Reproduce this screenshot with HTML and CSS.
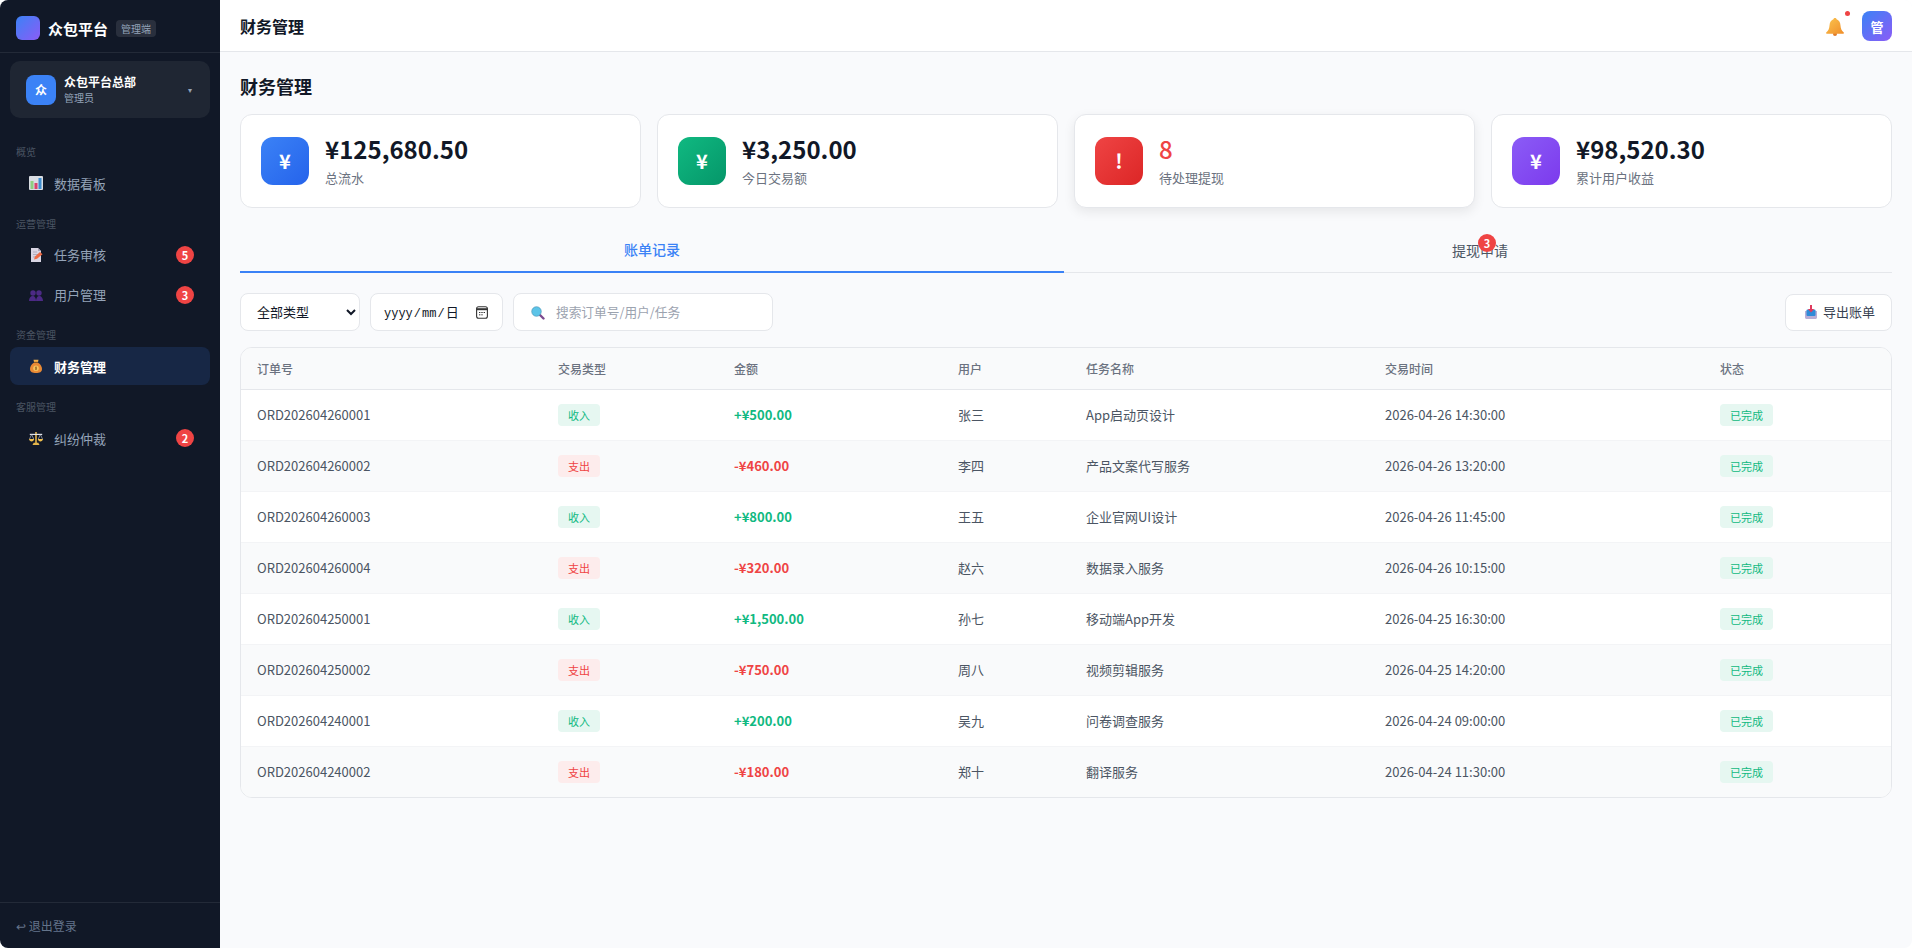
FILE: index.html
```html
<!DOCTYPE html>
<html lang="zh-CN">
<head>
<meta charset="utf-8">
<title>财务管理</title>
<link rel="stylesheet" href="styles.css">
</head>
<body>
<div class="app">
  <aside class="sidebar">
    <div class="brand">
      <div class="brand-logo"></div>
      <span class="brand-name">众包平台</span>
      <span class="brand-tag">管理端</span>
    </div>
    <div class="account">
      <div class="account-avatar">众</div>
      <div class="account-info">
        <div class="account-name">众包平台总部</div>
        <div class="account-role">管理员</div>
      </div>
      <span class="account-caret">▾</span>
    </div>
    <nav class="nav">
      <div class="nav-label">概览</div>
      <a class="nav-item"><span class="nav-icon">
        <svg viewBox="0 0 14 14" width="14" height="14"><rect x="0" y="0" width="14" height="14" rx="1" fill="#d9dde3"/><rect x="1.5" y="5" width="3" height="8" fill="#8ed081"/><rect x="5.5" y="7" width="3" height="6" fill="#d8436e"/><rect x="9.5" y="2" width="3" height="11" fill="#3f8ed0"/></svg>
      </span><span class="nav-text">数据看板</span></a>
      <div class="nav-label">运营管理</div>
      <a class="nav-item"><span class="nav-icon">
        <svg viewBox="0 0 14 14" width="14" height="14"><path d="M2 0h7l3 3v11H2z" fill="#d9d5e3"/><path d="M9 0l3 3H9z" fill="#a9a4b8"/><path d="M4 4h4M4 6.5h5M4 9h3" stroke="#a7a2b5" stroke-width=".8"/><path d="M5 11.5l1-3 5-4.500 2.500 2.300-5.500 4.500z" fill="#ee6a45"/></svg>
      </span><span class="nav-text">任务审核</span><span class="nav-badge">5</span></a>
      <a class="nav-item"><span class="nav-icon">
        <svg viewBox="0 0 14 14" width="14" height="14"><g fill="#4c2a85"><circle cx="4" cy="5" r="2.700"/><circle cx="10" cy="5" r="2.700"/><path d="M0 13c0-3 1.500-5 3.700-5s3.300 2 3.300 5z"/><path d="M7 13c0-3 1.300-5 3.300-5S14 10 14 13z"/></g></svg>
      </span><span class="nav-text">用户管理</span><span class="nav-badge">3</span></a>
      <div class="nav-label">资金管理</div>
      <a class="nav-item active"><span class="nav-icon">
        <svg viewBox="0 0 14 14" width="14" height="14"><path d="M5 3L4.500 .8h5L9 3z" fill="#f4b04a"/><path d="M5.200 3.500h3.600C12 5.500 13 8 13 10c0 3-2.500 4-6 4s-6-1-6-4c0-2 1-4.500 4.200-6.500z" fill="#e98a35"/><rect x="5" y="2.800" width="4" height="1" fill="#8a5a22"/><circle cx="7" cy="9.300" r="2.800" fill="#f6c35c"/><path d="M7 7.500v3.600M8 8.300H6.500v1h1v1H6" stroke="#8a5a22" stroke-width=".6" fill="none"/></svg>
      </span><span class="nav-text">财务管理</span></a>
      <div class="nav-label">客服管理</div>
      <a class="nav-item"><span class="nav-icon">
        <svg viewBox="0 0 14 14" width="14" height="14"><path d="M6.200 1h1.600v11H6.200z" fill="#e5b54a"/><path d="M.8 2.800h12.400v1.200H.8z" fill="#e3e5ea"/><path d="M3.500 14h7l-1.200-2.200H4.700z" fill="#e5b54a"/><path d="M0 8h5.200c-.2 1.500-1.300 2.400-2.600 2.400S.2 9.500 0 8zM8.800 8H14c-.2 1.500-1.300 2.400-2.600 2.400S9 9.500 8.800 8z" fill="#f2c14e"/><path d="M2.600 3.500L.5 8M2.600 3.500L4.700 8M11.400 3.500L9.300 8M11.400 3.500L13.500 8" stroke="#c7ccd6" stroke-width=".6" fill="none"/></svg>
      </span><span class="nav-text">纠纷仲裁</span><span class="nav-badge">2</span></a>
    </nav>
    <div class="sidebar-foot">↩ 退出登录</div>
  </aside>
  <div class="main">
    <header class="topbar">
      <div class="topbar-title">财务管理</div>
      <div class="topbar-right">
        <div class="bell">
          <svg viewBox="0 0 18 18" width="18" height="18"><defs><linearGradient id="bellFill" x1="0" y1="0" x2="1" y2="1"><stop offset="0" stop-color="#fbc54f"/><stop offset="1" stop-color="#f08e2a"/></linearGradient></defs><circle cx="9" cy="16" r="2" fill="#e07b2a"/><path d="M9 0c1 0 1.500.6 1.600 1.300C13 2.200 14.300 4.500 14.500 7.500c.2 3 1 5 3.300 7 .3.500 0 1.200-.6 1.200H.8c-.6 0-.9-.7-.6-1.200 2.300-2 3.100-4 3.300-7 .2-3 1.500-5.300 3.900-6.200C7.500.6 8 0 9 0z" fill="url(#bellFill)"/></svg>
          <span class="bell-dot"></span>
        </div>
        <div class="top-avatar">管</div>
      </div>
    </header>
    <main class="content">
      <h1 class="page-title">财务管理</h1>
      <section class="stats">
        <div class="stat">
          <div class="stat-icon blue">¥</div>
          <div class="stat-body"><div class="stat-value">¥125,680.50</div><div class="stat-label">总流水</div></div>
        </div>
        <div class="stat">
          <div class="stat-icon green">¥</div>
          <div class="stat-body"><div class="stat-value">¥3,250.00</div><div class="stat-label">今日交易额</div></div>
        </div>
        <div class="stat raised">
          <div class="stat-icon red">!</div>
          <div class="stat-body"><div class="stat-value danger">8</div><div class="stat-label">待处理提现</div></div>
        </div>
        <div class="stat">
          <div class="stat-icon purple">¥</div>
          <div class="stat-body"><div class="stat-value">¥98,520.30</div><div class="stat-label">累计用户收益</div></div>
        </div>
      </section>
      <div class="tabs">
        <div class="tab active">账单记录</div>
        <div class="tab second">提现申请<span class="tab-badge">3</span></div>
      </div>
      <div class="filters">
        <select class="field select"><option>全部类型</option></select>
        <div class="field date">
          <span class="date-text">yyyy<span class="date-sep">/</span>mm<span class="date-sep">/</span><span class="date-day">日</span></span>
          <svg class="date-icon" viewBox="0 0 12 13" width="12" height="13"><rect x=".6" y=".8" width="10.800" height="11.400" rx="2" fill="none" stroke="#333" stroke-width="1.100"/><path d="M.6 3.200h10.800" stroke="#333" stroke-width="2"/><path d="M3 6.500h1.400M5.300 6.500h1.400M7.600 6.500h1.400M3 8.800h1.400M5.300 8.800h1.400" stroke="#333"/></svg>
        </div>
        <div class="field search">
          <svg class="search-icon" viewBox="0 0 14 14" width="14" height="14"><path d="M8.500 8.500l4 4" stroke="#7c4a8f" stroke-width="2.400" stroke-linecap="round"/><circle cx="5.500" cy="5.500" r="4.800" fill="#5cc4e8" stroke="#4a90b0" stroke-width=".6"/></svg>
          <span class="search-text">搜索订单号/用户/任务</span>
        </div>
        <button class="export">
          <svg class="export-icon" viewBox="0 0 12 14" width="12" height="14"><path d="M0 6h12v6.500c0 .8-.7 1.500-1.500 1.500h-9C.7 14 0 13.300 0 12.500z" fill="#b9aed6"/><rect x="1.500" y="4.500" width="9" height="6.500" rx="1" fill="#2f8bd8"/><path d="M5 0h2v4h2.200L6 7.500 2.800 4H5z" fill="#e03a5e"/></svg>导出账单
        </button>
      </div>
      <div class="table-card">
        <table class="table">
          <colgroup><col class="c1"><col class="c2"><col class="c3"><col class="c4"><col class="c5"><col class="c6"><col></colgroup>
          <thead><tr><th>订单号</th><th>交易类型</th><th>金额</th><th>用户</th><th>任务名称</th><th>交易时间</th><th>状态</th></tr></thead>
          <tbody>
            <tr><td>ORD202604260001</td><td><span class="tag in">收入</span></td><td class="amt plus">+¥500.00</td><td>张三</td><td>App启动页设计</td><td>2026-04-26 14:30:00</td><td><span class="tag done">已完成</span></td></tr>
            <tr><td>ORD202604260002</td><td><span class="tag out">支出</span></td><td class="amt minus">-¥460.00</td><td>李四</td><td>产品文案代写服务</td><td>2026-04-26 13:20:00</td><td><span class="tag done">已完成</span></td></tr>
            <tr><td>ORD202604260003</td><td><span class="tag in">收入</span></td><td class="amt plus">+¥800.00</td><td>王五</td><td>企业官网UI设计</td><td>2026-04-26 11:45:00</td><td><span class="tag done">已完成</span></td></tr>
            <tr><td>ORD202604260004</td><td><span class="tag out">支出</span></td><td class="amt minus">-¥320.00</td><td>赵六</td><td>数据录入服务</td><td>2026-04-26 10:15:00</td><td><span class="tag done">已完成</span></td></tr>
            <tr><td>ORD202604250001</td><td><span class="tag in">收入</span></td><td class="amt plus">+¥1,500.00</td><td>孙七</td><td>移动端App开发</td><td>2026-04-25 16:30:00</td><td><span class="tag done">已完成</span></td></tr>
            <tr><td>ORD202604250002</td><td><span class="tag out">支出</span></td><td class="amt minus">-¥750.00</td><td>周八</td><td>视频剪辑服务</td><td>2026-04-25 14:20:00</td><td><span class="tag done">已完成</span></td></tr>
            <tr><td>ORD202604240001</td><td><span class="tag in">收入</span></td><td class="amt plus">+¥200.00</td><td>吴九</td><td>问卷调查服务</td><td>2026-04-24 09:00:00</td><td><span class="tag done">已完成</span></td></tr>
            <tr><td>ORD202604240002</td><td><span class="tag out">支出</span></td><td class="amt minus">-¥180.00</td><td>郑十</td><td>翻译服务</td><td>2026-04-24 11:30:00</td><td><span class="tag done">已完成</span></td></tr>
          </tbody>
        </table>
      </div>
    </main>
  </div>
</div>
</body>
</html>
```
FILE: styles.css
```css
* { box-sizing: border-box; }
html, body { margin: 0; height: 100%; overflow: hidden; background: #fff; }
body { font-family: "Noto Sans CJK SC", "Noto Sans", sans-serif; color: #111827; }
.app { display: flex; height: 948px; border-radius: 8px; overflow: hidden; background: #f9fafc; }

.sidebar { width: 220px; flex: none; background: #111827; display: flex; flex-direction: column; color: #94a3b8; }
.brand { display: flex; align-items: center; padding: 16px 16px 12px; gap: 8px; border-bottom: 1px solid #232a38; }
.brand-logo { width: 24px; height: 24px; border-radius: 6px; background: linear-gradient(135deg, #3b82f6, #8b5cf6); }
.brand-name { font-size: 15px; font-weight: 700; color: #fff; }
.brand-tag { font-size: 10px; line-height: 17px; padding: 0 5px; border-radius: 4px; background: rgba(255,255,255,.1); color: #94a3b8; }
.account { margin: 8px 10px 0; height: 57px; border-radius: 10px; background: #1f2633; display: flex; align-items: center; padding: 0 18px 0 16px; gap: 8px; }
.account-avatar { width: 30px; height: 30px; border-radius: 8px; background: #3b82f6; color: #fff; font-size: 12px; font-weight: 700; display: flex; align-items: center; justify-content: center; }
.account-info { flex: 1; }
.account-name { font-size: 12px; font-weight: 700; color: #fff; line-height: 16px; }
.account-role { font-size: 10px; line-height: 16px; color: #94a3b8; }
.account-caret { font-size: 8px; color: #94a3b8; }
.nav { flex: 1; padding: 26px 10px 0; }
.nav-label { font-size: 10px; line-height: 16px; color: #4b5563; padding: 0 6px; margin: 13.7px 0 4px; }
.nav-label:first-child { margin-top: 0; }
.nav-item { height: 38px; margin-bottom: 2px; display: flex; align-items: center; border-radius: 8px; padding: 0 16px 0 19px; font-size: 13px; color: #94a3b8; }
.nav-item.active { background: #172745; color: #fff; font-weight: 700; }
.nav-icon { width: 25px; height: 14px; display: block; flex: none; }
.nav-icon svg { display: block; }
.nav-text { flex: 1; }
.nav-badge { width: 18px; height: 18px; border-radius: 50%; background: #ef4444; color: #fff; font-size: 11px; font-weight: 700; display: flex; align-items: center; justify-content: center; }
.sidebar-foot { height: 46px; border-top: 1px solid #232a38; padding: 0 16px; display: flex; align-items: center; font-size: 12px; color: #64748b; }

.main { flex: 1; display: flex; flex-direction: column; min-width: 0; }
.topbar { height: 52px; background: #fff; border-bottom: 1px solid #e5e7eb; display: flex; align-items: center; justify-content: space-between; padding: 1px 20px 0; }
.topbar-title { font-size: 16px; font-weight: 700; }
.topbar-right { display: flex; align-items: center; gap: 18px; }
.bell { position: relative; height: 18px; margin-top: 2px; }
.bell svg { display: block; }
.bell-dot { position: absolute; top: -7px; right: -6px; width: 5px; height: 5px; border-radius: 50%; background: #ef4444; }
.top-avatar { width: 30px; height: 30px; border-radius: 8px; background: linear-gradient(135deg, #3b82f6, #8b5cf6); color: #fff; font-size: 13px; font-weight: 700; display: flex; align-items: center; justify-content: center; }

.content { padding: 21px 20px 20px; flex: 1; }
.page-title { margin: 0 0 14px; font-size: 18px; font-weight: 700; line-height: 26px; padding-bottom: 1px; }
.stats { display: grid; grid-template-columns: repeat(4, 1fr); gap: 16px; }
.stat { height: 93.5px; background: #fff; border: 1px solid #e5e7eb; border-radius: 12px; padding: 0 20px; display: flex; align-items: center; gap: 16px; }
.stat.raised { box-shadow: 0 4px 12px rgba(0,0,0,.08); }
.stat-icon { width: 48px; height: 48px; border-radius: 12px; color: #fff; font-size: 20px; font-weight: 700; display: flex; align-items: center; justify-content: center; flex: none; }
.blue { background: linear-gradient(135deg, #3b82f6, #2563eb); }
.green { background: linear-gradient(135deg, #10b981, #059669); }
.red { background: linear-gradient(135deg, #ef4444, #dc2626); }
.purple { background: linear-gradient(135deg, #8b5cf6, #7c3aed); }
.stat-body { padding-bottom: 2px; }
.stat-value { font-size: 24px; font-weight: 700; line-height: 31px; color: #111827; margin-bottom: 4px; }
.stat-value.danger { color: #ef4444; font-weight: 500; }
.stat-label { font-size: 13px; line-height: 19px; color: #6b7280; }

.tabs { display: grid; grid-template-columns: 824fr 828fr; margin-top: 20px; border-bottom: 1px solid #e5e7eb; }
.tab { position: relative; height: 45.5px; display: flex; align-items: center; justify-content: center; font-size: 14px; color: #4b5563; margin-bottom: -1px; }
.tab.second { padding-left: 4px; }
.tab.active { color: #3b82f6; border-bottom: 2px solid #3b82f6; font-weight: 500; }
.tab-badge { position: absolute; left: 50%; top: 6px; width: 18px; height: 18px; border-radius: 50%; background: #ef4444; color: #fff; font-size: 11px; font-weight: 700; display: flex; align-items: center; justify-content: center; }

.filters { display: flex; align-items: center; gap: 10px; margin-top: 20px; }
.field { height: 38px; background: #fff; border: 1px solid #e5e7eb; border-radius: 8px; font-size: 13px; font-family: inherit; color: #111827; padding-bottom: 2px; }
.select { width: 120px; padding: 0 12px 2px; }
.date { width: 133px; padding: 0 14px 2px 13px; display: flex; align-items: center; justify-content: space-between; }
.date-text { font-family: "Liberation Mono", monospace; font-size: 12px; color: #111827; }
.date-sep { margin: 0 1px; }
.date-day { font-family: "Noto Sans CJK SC", sans-serif; font-size: 13px; }
.date-icon { margin-top: 2px; flex: none; }
.search { width: 260px; display: flex; align-items: center; padding: 0 17px 2px; gap: 11px; color: #9ca3af; font-size: 12.7px; }
.search-icon { flex: none; margin-top: 3px; }
.export { margin-left: auto; height: 37px; padding: 0 16px 2px 19px; background: #fff; border: 1px solid #e5e7eb; border-radius: 8px; font-family: inherit; font-size: 13px; color: #374151; display: flex; align-items: center; gap: 6px; }
.export-icon { flex: none; margin-top: 2px; }

.table-card { margin-top: 16px; background: #fff; border: 1px solid #e5e7eb; border-radius: 12px; overflow: hidden; }
.table { width: 100%; border-collapse: collapse; table-layout: fixed; font-size: 13px; }
.c1 { width: 301px; } .c2 { width: 176px; } .c3 { width: 224px; } .c4 { width: 128px; } .c5 { width: 299px; } .c6 { width: 335px; }
.table th { height: 41px; padding: 0 16px; background: #f9fafb; border-bottom: 1px solid #e5e7eb; text-align: left; font-size: 12px; font-weight: 500; color: #6b7280; }
.table td { height: 51px; padding: 0 16px; color: #4b5563; border-bottom: 1px solid #f3f4f6; }
.table tbody tr:last-child td { border-bottom: none; }
.table tbody tr:nth-child(even) td { background: #f9fafb; }
.tag { display: inline-block; font-size: 11px; line-height: 22px; padding: 0 10px; border-radius: 4px; }
.tag.in, .tag.done { background: #e6f7f1; color: #10b981; }
.tag.out { background: #fdecec; color: #ef4444; }
.table td.amt { font-weight: 700; }
.table td.plus { color: #10b981; }
.table td.minus { color: #ef4444; }
```
